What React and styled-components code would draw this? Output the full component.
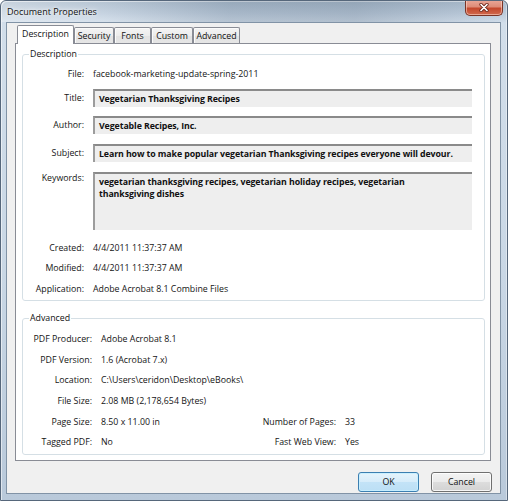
import React from "react";
import styled, { createGlobalStyle } from "styled-components";

const Global = createGlobalStyle`
  html, body { margin: 0; padding: 0; background: #fff; }
  body { font-family: "Open Sans", "Noto Sans", sans-serif; font-size: 8.8px; color: #141414; }
`;

const Window = styled.div`
  width: 508px;
  height: 501px;
  box-sizing: border-box;
  display: flex;
  flex-direction: column;
  border: 1px solid #56677b;
  border-radius: 6px 6px 0 0;
  background: linear-gradient(180deg, #a9bacb 0px, #bccbdb 12px, #d2deea 22px, #c9d7e5 55%, #b9c9da 100%);
  box-shadow: inset 1px 1px 0 rgba(255,255,255,.55), inset -1px 0 0 rgba(255,255,255,.4);
  overflow: hidden;
`;

const TitleBar = styled.div`
  height: 21px;
  flex: none;
  display: flex;
  align-items: flex-start;
  justify-content: space-between;
  padding-left: 6px;
  background: linear-gradient(90deg, rgba(255,255,255,.35) 0%, rgba(255,255,255,.15) 20%, rgba(70,90,112,.18) 45%, rgba(70,90,112,.22) 70%, rgba(255,255,255,0) 100%);
`;

const Title = styled.span`
  align-self: center;
  font-size: 9px;
  color: #111;
  text-shadow: 0 0 6px rgba(255,255,255,.9), 0 0 3px rgba(255,255,255,.9);
`;

const CloseBtn = styled.div`
  width: 38px;
  height: 16px;
  margin: -1px 4px 0 0;
  box-sizing: border-box;
  display: flex;
  align-items: center;
  justify-content: center;
  border: 1px solid #7a3426;
  border-top: none;
  border-radius: 0 0 5px 5px;
  background: linear-gradient(180deg, #eaa899 0%, #de8c78 45%, #c4482d 55%, #d0694d 100%);
  box-shadow: inset 0 0 0 1px rgba(255,220,210,.55);
`;

const Body = styled.div`
  flex: 1;
  margin: 0 6px 6px 5px;
  box-sizing: border-box;
  display: flex;
  flex-direction: column;
  border: 1px solid #8193a6;
  background: #f0f0f0;
`;

const TabStrip = styled.div`
  height: 21px;
  flex: none;
  display: flex;
  align-items: flex-end;
  padding-left: 10px;
  position: relative;
  z-index: 1;
`;

const Tab = styled.div`
  width: ${p => p.$w}px;
  height: ${p => (p.$active ? 19 : 16)}px;
  margin-bottom: ${p => (p.$active ? 0 : 1)}px;
  box-sizing: border-box;
  display: flex;
  align-items: center;
  justify-content: center;
  border: 1px solid #898c95;
  border-bottom: none;
  border-radius: 2px 2px 0 0;
  color: #111;
  background: ${p => (p.$active ? "#fff" : "linear-gradient(180deg, #f4f4f4 0%, #ececec 50%, #e2e2e2 51%, #e6e6e6 100%)")};
  box-shadow: ${p => (p.$active ? "none" : "inset 1px 1px 0 #fbfbfb")};
  padding-bottom: ${p => (p.$active ? 2 : 0)}px;
`;

const Panel = styled.div`
  height: 418px;
  flex: none;
  margin: -1px 9px 0 8px;
  box-sizing: border-box;
  border: 1px solid #898c95;
  background: #fff;
  padding: 3px 5px 0 6px;
  display: flex;
  flex-direction: column;
  gap: 10px;
`;

const Group = styled.fieldset`
  margin: 0;
  padding: 4px 12px ${p => p.$pb}px 0;
  min-width: 0;
  border: 1px solid #d5dfe5;
  border-radius: 3px;
`;

const Legend = styled.legend`
  margin-left: 6px;
  padding: 0 1px;
  line-height: 14px;
  color: #111;
`;

const Row = styled.div`
  display: grid;
  grid-template-columns: 61px 1fr;
  column-gap: 9px;
  align-items: ${p => (p.$top ? "start" : "center")};
  margin-top: ${p => p.$mt || 0}px;
  min-height: 18px;
`;

const Label = styled.span`
  text-align: right;
  line-height: ${p => p.$lh || 18}px;
  white-space: nowrap;
  color: #141414;
`;

const Value = styled.span`
  line-height: 18px;
  white-space: nowrap;
  color: #141414;
`;

const Field = styled.div`
  height: ${p => p.$h || 18}px;
  box-sizing: border-box;
  background: #eeeeee;
  border-top: 2px solid #8a8a8a;
  border-left: 2px solid #9c9c9c;
  padding: ${p => (p.$multi ? "2px 4px" : "0 4px")};
  font-weight: 700;
  letter-spacing: -0.1px;
  line-height: ${p => (p.$multi ? 12 : 16)}px;
  white-space: ${p => (p.$multi ? "pre-line" : "nowrap")};
  overflow: hidden;
  color: #111;
`;

const AdvGrid = styled.div`
  display: grid;
  grid-template-columns: 69px 140px 86px auto;
  column-gap: 9px;
  grid-auto-rows: 20.6px;
  align-items: center;
`;

const ButtonRow = styled.div`
  display: flex;
  justify-content: flex-end;
  gap: 12px;
  margin-top: 11px;
  padding-right: 8px;
`;

const Btn = styled.div`
  width: 61px;
  height: 20px;
  box-sizing: border-box;
  display: flex;
  align-items: center;
  justify-content: center;
  border-radius: 3px;
  color: #111;
  border: 1px solid ${p => (p.$primary ? "#3c7fb1" : "#707070")};
  background: ${p =>
    p.$primary
      ? "linear-gradient(180deg, #e6f4fc 0%, #d6ecfa 50%, #c3e3f7 51%, #bcdff5 100%)"
      : "linear-gradient(180deg, #f3f3f3 0%, #ebebeb 50%, #dddddd 51%, #d2d2d2 100%)"};
  box-shadow: inset 0 0 0 1px ${p => (p.$primary ? "rgba(200,240,255,.9)" : "rgba(255,255,255,.8)")};
`;

const tabs = [
  { name: "Description", w: 57, active: true },
  { name: "Security", w: 40 },
  { name: "Fonts", w: 37 },
  { name: "Custom", w: 42 },
  { name: "Advanced", w: 47 },
];

const advanced = [
  ["PDF Producer:", "Adobe Acrobat 8.1"],
  ["PDF Version:", "1.6 (Acrobat 7.x)"],
  ["Location:", "C:\\Users\\ceridon\\Desktop\\eBooks\\"],
  ["File Size:", "2.08 MB (2,178,654 Bytes)"],
  ["Page Size:", "8.50 x 11.00 in", "Number of Pages:", "33"],
  ["Tagged PDF:", "No", "Fast Web View:", "Yes"],
];

export default function App() {
  return (
    <>
      <Global />
      <Window>
        <TitleBar>
          <Title>Document Properties</Title>
          <CloseBtn>
            <svg width="10" height="9" viewBox="0 0 10 9">
              <path d="M2 1.5 L8 7.5 M8 1.5 L2 7.5" stroke="#6a2418" strokeWidth="3.2" strokeLinecap="round" />
              <path d="M2 1.5 L8 7.5 M8 1.5 L2 7.5" stroke="#fff" strokeWidth="1.7" strokeLinecap="round" />
            </svg>
          </CloseBtn>
        </TitleBar>
        <Body>
          <TabStrip>
            {tabs.map(t => (
              <Tab key={t.name} $w={t.w} $active={t.active}>{t.name}</Tab>
            ))}
          </TabStrip>
          <Panel>
            <Group $pb={2}>
              <Legend>Description</Legend>
              <Row>
                <Label>File:</Label>
                <Value>facebook-marketing-update-spring-2011</Value>
              </Row>
              <Row $mt={6}>
                <Label>Title:</Label>
                <Field>Vegetarian Thanksgiving Recipes</Field>
              </Row>
              <Row $mt={9}>
                <Label>Author:</Label>
                <Field>Vegetable Recipes, Inc.</Field>
              </Row>
              <Row $mt={10}>
                <Label>Subject:</Label>
                <Field>Learn how to make popular vegetarian Thanksgiving recipes everyone will devour.</Field>
              </Row>
              <Row $mt={10} $top>
                <Label $lh={13}>Keywords:</Label>
                <Field $h={58} $multi>
                  {"vegetarian thanksgiving recipes, vegetarian holiday recipes, vegetarian\nthanksgiving dishes"}
                </Field>
              </Row>
              <Row $mt={9}>
                <Label>Created:</Label>
                <Value>4/4/2011 11:37:37 AM</Value>
              </Row>
              <Row $mt={2}>
                <Label>Modified:</Label>
                <Value>4/4/2011 11:37:37 AM</Value>
              </Row>
              <Row $mt={3}>
                <Label>Application:</Label>
                <Value>Adobe Acrobat 8.1 Combine Files</Value>
              </Row>
            </Group>
            <Group $pb={1}>
              <Legend>Advanced</Legend>
              <AdvGrid>
                {advanced.map(([l, v, l2, v2]) => (
                  <React.Fragment key={l}>
                    <Label>{l}</Label>
                    <Value>{v}</Value>
                    <Label>{l2 || ""}</Label>
                    <Value>{v2 || ""}</Value>
                  </React.Fragment>
                ))}
              </AdvGrid>
            </Group>
          </Panel>
          <ButtonRow>
            <Btn $primary>OK</Btn>
            <Btn>Cancel</Btn>
          </ButtonRow>
        </Body>
      </Window>
    </>
  );
}
